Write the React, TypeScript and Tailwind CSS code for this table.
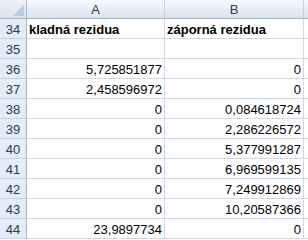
import * as React from 'react';

const rows: { n: number; a: string; b: string; bold?: boolean }[] = [
  { n: 34, a: 'kladná rezidua', b: 'záporná rezidua', bold: true },
  { n: 35, a: '', b: '' },
  { n: 36, a: '5,725851877', b: '0' },
  { n: 37, a: '2,458596972', b: '0' },
  { n: 38, a: '0', b: '0,084618724' },
  { n: 39, a: '0', b: '2,286226572' },
  { n: 40, a: '0', b: '5,377991287' },
  { n: 41, a: '0', b: '6,969599135' },
  { n: 42, a: '0', b: '7,249912869' },
  { n: 43, a: '0', b: '10,20587366' },
  { n: 44, a: '23,9897734', b: '0' },
];

const colHead =
  'h-[19px] flex items-end justify-center pb-[1px] border-b border-r border-b-[#9eb6ce] border-r-[#c5d2df] bg-gradient-to-b from-[#f7f9fc] to-[#dae3ee] text-[#2f3b4a] leading-[15px]';
const rowHead =
  'h-[20px] flex items-end justify-center pb-[1px] border-b border-r border-b-[#c1d0e2] border-r-[#9eb6ce] bg-[#e4ecf7] text-[#2f3b4a] leading-[15px]';
const cell =
  'h-[20px] flex items-end pb-[1px] px-[2px] border-b border-r border-[#d0d7e5] bg-white text-black leading-[15px] whitespace-nowrap overflow-visible';

export default function App() {
  return (
    <div
      className="w-[308px] h-[240px] overflow-hidden bg-white text-[13px]"
      style={{ fontFamily: '"Liberation Sans", Arial, sans-serif' }}
    >
      <div className="grid grid-cols-[27px_138px_139px_1fr]">
        <div className="h-[19px] border-b border-r border-b-[#9eb6ce] border-r-[#9eb6ce] bg-gradient-to-b from-[#eef2f8] to-[#dae3ee] relative">
          <svg className="absolute left-0 top-0" width="26" height="18" viewBox="0 0 26 18">
            <polygon points="24,4 24,16 12,16" fill="#bccbdc" />
            <line x1="12" y1="16" x2="24" y2="4" stroke="#f4f7fb" strokeWidth="1" />
          </svg>
        </div>
        <div className={colHead}>A</div>
        <div className={colHead}>B</div>
        <div className="h-[19px] border-b border-b-[#9eb6ce] bg-gradient-to-b from-[#f7f9fc] to-[#dae3ee]" />

        {rows.map((r) => (
          <React.Fragment key={r.n}>
            <div className={rowHead}>{r.n}</div>
            <div className={`${cell} ${r.bold ? 'justify-start font-bold' : 'justify-end'}`}>{r.a}</div>
            <div className={`${cell} ${r.bold ? 'justify-start font-bold' : 'justify-end'}`}>{r.b}</div>
            <div className="h-[20px] border-b border-[#d0d7e5] bg-white" />
          </React.Fragment>
        ))}
      </div>
    </div>
  );
}
